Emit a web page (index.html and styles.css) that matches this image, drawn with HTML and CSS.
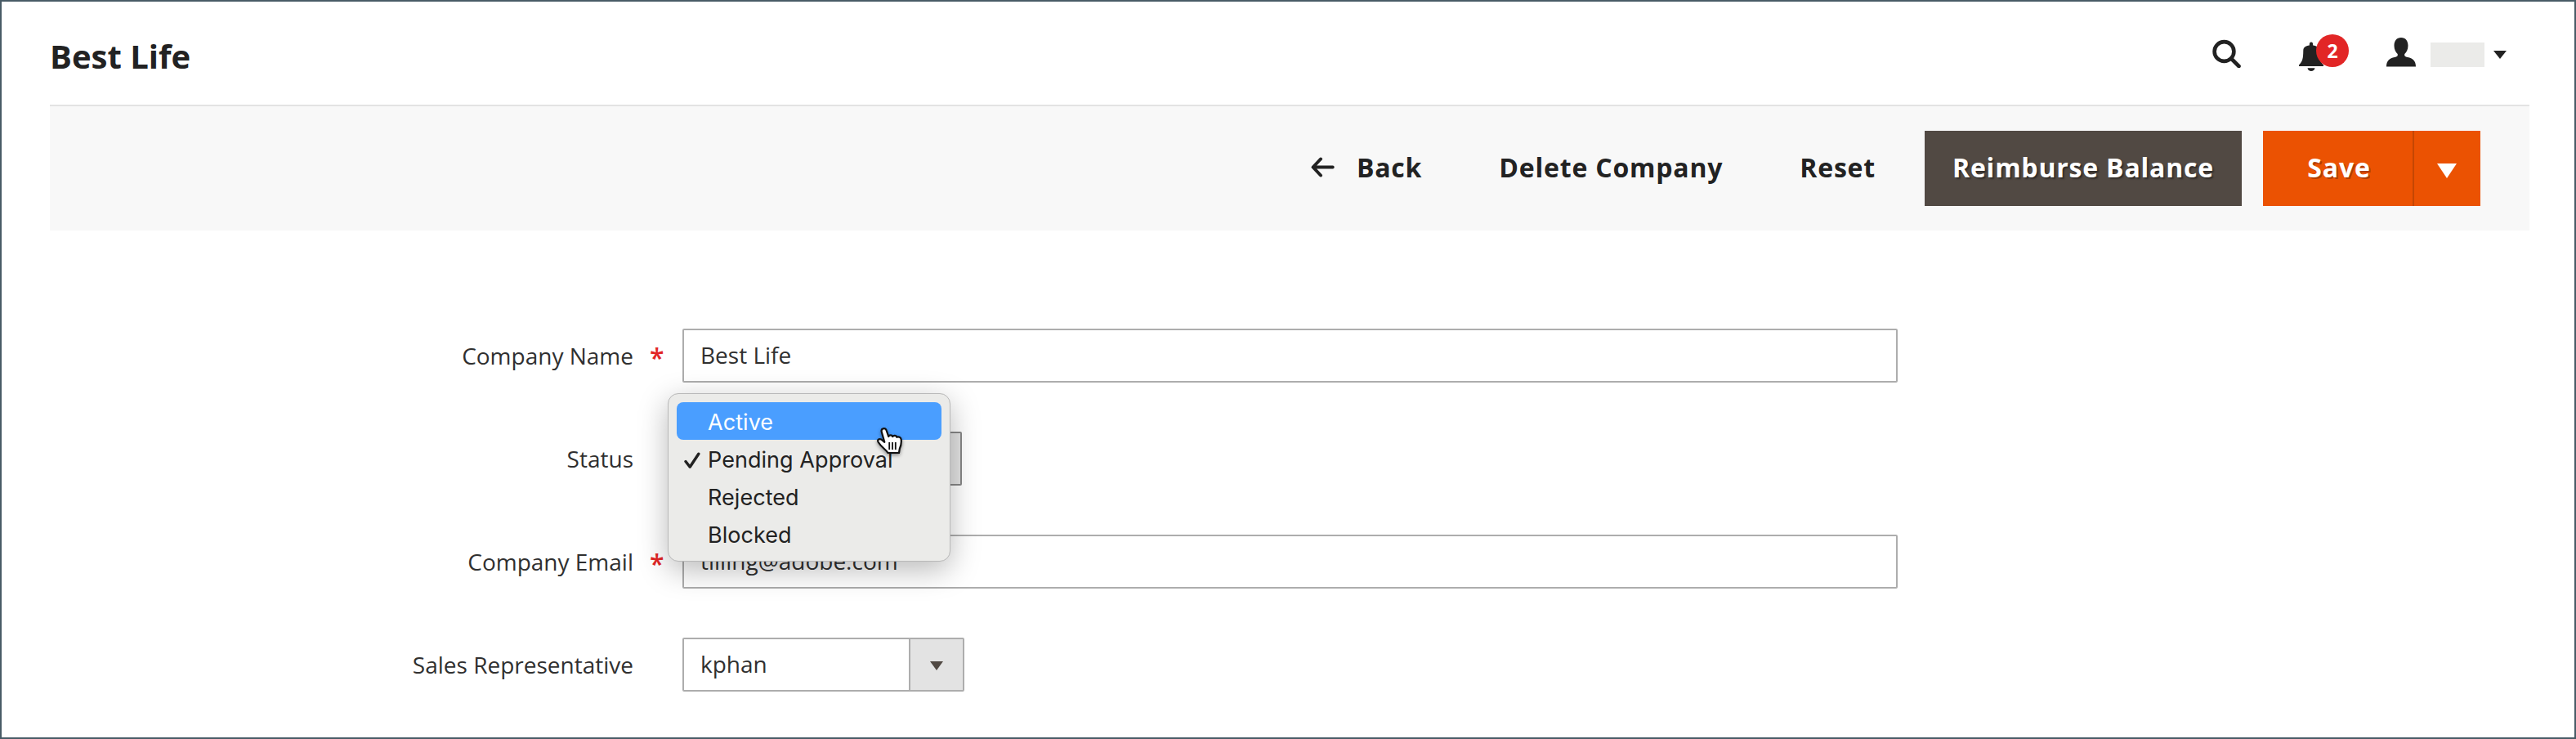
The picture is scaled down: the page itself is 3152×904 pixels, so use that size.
FILE: index.html
```html
<!DOCTYPE html>
<html lang="en">
<head>
<meta charset="utf-8">
<title>Best Life</title>
<link rel="stylesheet" href="styles.css">
</head>
<body>
<div class="page">
  <header class="header">
    <h1 class="title">Best Life</h1>
    <div class="tools">
      <svg class="icon-search" width="36" height="36" viewBox="0 0 36 36"><circle cx="14.500" cy="16" r="11.900" fill="none" stroke="#222" stroke-width="4.600"/><path d="M23.500 25 L32.500 34" stroke="#222" stroke-width="4.600" stroke-linecap="round"/></svg>
      <div class="bell">
        <svg width="30" height="37" viewBox="0 0 30 37"><path d="M15 0.5 C16.8 0.5 17.2 1.5 17.2 4.6 C22 5.4 24.6 7 24.7 11 C24.9 20 25.2 23.500 30 28.500 L30 30 L0 30 L0 28.500 C4.800 23.500 5.100 20 5.300 11 C5.400 7 8 5.400 12.800 4.600 C12.800 1.500 13.200 .5 15 .5 Z M10.500 32.300 H19.500 C18.800 37.300 11.200 37.300 10.500 32.300 Z" fill="#222"/></svg>
        <span class="badge">2</span>
      </div>
      <svg class="icon-user" width="36" height="36" viewBox="0 0 36 36"><path d="M18 0 C23.500 0 26.500 4 26.500 10 C26.500 14.500 24.500 18 22.300 20 C21.800 22.500 22.800 23.300 26 24 C32 25.300 36 28 36 35.500 L0 35.500 C0 28 4 25.300 10 24 C13.200 23.300 14.200 22.500 13.700 20 C11.500 18 9.500 14.500 9.500 10 C9.500 4 12.500 0 18 0 Z" fill="#222"/></svg>
      <span class="user-name"></span>
      <svg class="icon-caret" width="16" height="10" viewBox="0 0 16 10"><path d="M0 0 H16 L8 10 Z" fill="#222"/></svg>
    </div>
  </header>
  <div class="toolbar">
    <button class="btn btn-back"><svg width="29" height="25" viewBox="0 0 29 25"><path d="M12 2.500 L2.600 12.500 L12 22.500 M3 12.500 H26.700" fill="none" stroke="#222" stroke-width="4" stroke-linecap="round" stroke-linejoin="round"/></svg>Back</button>
    <button class="btn btn-delete">Delete Company</button>
    <button class="btn btn-reset">Reset</button>
    <button class="btn btn-dark">Reimburse Balance</button>
    <div class="split">
      <button class="btn btn-save">Save</button>
      <button class="btn btn-toggle"><svg width="24" height="18" viewBox="0 0 24 18"><path d="M0 0 H24 L12 18 Z" fill="#fff"/></svg></button>
    </div>
  </div>
  <form class="form">
    <div class="row"><span class="label">Company Name</span><span class="req">*</span><div class="input">Best Life</div></div>
    <div class="row"><span class="label">Status</span><span class="req"></span>
      <div class="status">
        <div class="select select-status"><span class="value"></span><span class="arrow"></span></div>
        <ul class="menu">
          <li class="item item-active">Active</li>
          <li class="item"><svg class="check" width="20" height="21" viewBox="0 0 20 21"><path d="M2 11.500 L7.200 18.200 L17.800 2.200" fill="none" stroke="#222" stroke-width="3.400" stroke-linecap="round" stroke-linejoin="round"/></svg>Pending Approval</li>
          <li class="item">Rejected</li>
          <li class="item">Blocked</li>
        </ul>
        <svg class="cursor" width="36" height="40" viewBox="0 0 36 40"><path d="M9.500 2.400 C11.500 1.600 13.200 2.800 13.800 4.800 L16.200 12 C17.200 9.800 20.300 9.800 21.200 12 C22.500 10.200 25.700 10.600 26.400 12.800 C28.500 11.800 31.300 13 31.700 15.600 C32.200 19.500 31.600 23 29.800 27 L29 32 H15.500 C13.500 28 7.500 25.500 3.600 18.800 C2.200 16 4.500 14.200 7.200 15.500 L11.300 18.800 L7.800 6.500 C7.200 4.500 7.800 3 9.500 2.400 Z" fill="#fff" stroke="#111" stroke-width="2.200" stroke-linejoin="round"/><path d="M17.200 19 V28 M21 19 V28 M24.800 19 V28" stroke="#111" stroke-width="1.800"/></svg>
      </div>
    </div>
    <div class="row"><span class="label">Company Email</span><span class="req">*</span><div class="input">tilling@adobe.com</div></div>
    <div class="row"><span class="label">Sales Representative</span><span class="req"></span>
      <div class="select"><span class="value">kphan</span><span class="arrow"><svg width="16" height="11" viewBox="0 0 16 11"><path d="M0 0 H16 L8 11 Z" fill="#514943"/></svg></span></div>
    </div>
  </form>
</div>
</body>
</html>
```
FILE: styles.css
```css
* { box-sizing: border-box; }
body { margin: 0; background: #fff; font-family: "Open Sans", sans-serif; color: #303030; }
svg { display: block; flex: none; }
.page { width: 3152px; height: 904px; border: 2px solid #485b66; overflow: hidden; padding: 0 55px 0 59px; }
.header { height: 128px; border-bottom: 2px solid #e3e3e3; display: flex; justify-content: space-between; }
.title { margin: 39px 0 0; font-size: 40px; line-height: 56px; font-weight: 700; color: #222; }
.tools { display: flex; align-items: flex-start; padding-right: 28px; }
.icon-search { margin: 45px 70px 0 0; }
.bell { position: relative; margin: 49px 77px 0 0; }
.badge { position: absolute; left: 21px; top: -9px; width: 40px; height: 40px; border-radius: 50%; background: #e22626; color: #fff; font-size: 23px; line-height: 40px; font-weight: 700; text-align: center; }
.icon-user { margin: 44px 18px 0 0; }
.user-name { width: 66px; height: 30px; margin: 50px 11px 0 0; background: #ebebe9; }
.icon-caret { margin-top: 60px; }
.toolbar { height: 152px; background: #f8f8f8; display: flex; justify-content: flex-end; align-items: flex-start; padding: 30px 60px 0 0; }
.btn { height: 92px; border: 0; margin: 0; padding: 0 0 3px; background: none; display: flex; align-items: center; justify-content: center; font: 700 32px/44px "Open Sans", sans-serif; letter-spacing: 0.8px; color: #222; white-space: nowrap; }
.btn-back { gap: 27px; margin-right: 94px; }
.btn-delete { margin-right: 94px; }
.btn-reset { margin-right: 60px; }
.btn-dark { width: 388px; background: #514943; color: #fff; text-shadow: 2px 2px 2px rgba(0,0,0,.4); }
.split { display: flex; margin-left: 26px; }
.btn-save { width: 183px; padding-left: 3px; background: #eb5202; color: #fff; text-shadow: 2px 2px 0 rgba(0,0,0,.25); }
.btn-toggle { width: 83px; padding: 5px 2px 0 0; background: #eb5202; border-left: 2px solid #c44603; }
.form { padding-top: 120px; display: flex; flex-direction: column; gap: 60px; }
.row { height: 66px; display: flex; align-items: flex-start; font-size: 28px; line-height: 38px; }
.label { width: 714px; text-align: right; padding-top: 14px; }
.req { width: 60px; padding: 17px 0 0 20px; color: #e22626; font-size: 32px; line-height: 38px; font-weight: 600; }
.input { width: 1487px; height: 66px; border: 2px solid #adadad; border-radius: 2px; padding: 11px 20px; }
.select { width: 345px; height: 66px; border: 2px solid #adadad; border-radius: 2px; display: flex; }
.value { flex: 1; padding: 11px 20px; }
.arrow { width: 66px; border-left: 2px solid #adadad; background: #e3e3e3; display: flex; align-items: center; justify-content: center; padding-top: 3px; }
.status { position: relative; z-index: 1; }
.select-status { width: 342px; border-color: #878787; }
.menu { position: absolute; left: -18px; top: -47px; width: 346px; height: 206px; margin: 0; padding: 10px; list-style: none; background: #ebebe9; border: 1px solid #b8b8b8; border-radius: 13px; box-shadow: 0 10px 36px rgba(0,0,0,.28); font: 27px/46px Inter, sans-serif; letter-spacing: 0.05px; color: #222; }
.item { height: 46px; padding: 2px 0 0 38px; line-height: 45px; border-radius: 8px; position: relative; white-space: nowrap; }
.item-active { background: #4a9eff; color: #fff; }
.check { position: absolute; left: 9px; top: 15px; }
.cursor { position: absolute; left: 236px; top: -6px; filter: drop-shadow(0 2px 2px rgba(0,0,0,.4)); }
```
